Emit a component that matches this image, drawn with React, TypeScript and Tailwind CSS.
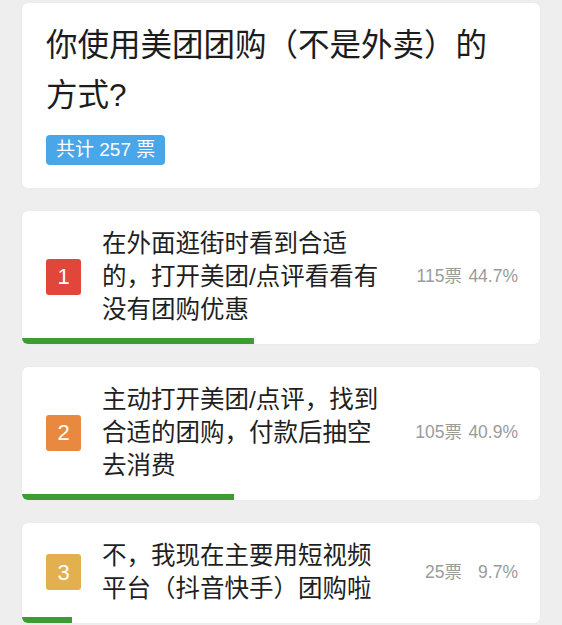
const options = [
  { id: 1, text: "在外面逛街时看到合适的，打开美团/点评看看有没有团购优惠", votes: 115, pct: 44.7, color: "bg-[#e0463a]" },
  { id: 2, text: "主动打开美团/点评，找到合适的团购，付款后抽空去消费", votes: 105, pct: 40.9, color: "bg-[#e8893f]" },
  { id: 3, text: "不，我现在主要用短视频平台（抖音快手）团购啦", votes: 25, pct: 9.7, color: "bg-[#e3b04f]" },
];

const App = () => {
  return (
    <div className="min-h-[625px] bg-[#eeeeee] pt-[3px] px-[22px] font-['Liberation_Sans','Noto_Sans_CJK_SC',sans-serif]">
      <div className="bg-white rounded-md shadow-[0_0_1px_rgba(0,0,0,0.08)] pl-[24px] pr-[22px] pt-[17px] pb-[23px]">
        <h1 className="text-[31.5px] leading-[50px] text-[#1c1c1c] font-normal">
          你使用美团团购（不是外卖）的方式?
        </h1>
        <span className="inline-block mt-[15px] bg-[#49a6e9] text-white text-[19px] leading-[30px] px-[10px] rounded-[4px]">
          共计 257 票
        </span>
      </div>

      <div className="flex flex-col gap-[23px] mt-[23px]">
        {options.map((o) => (
          <div key={o.id} className="bg-white rounded-md overflow-hidden shadow-[0_0_1px_rgba(0,0,0,0.08)]">
            <div className="flex items-center pl-[24px] pr-[22px] pt-[16px] pb-[12px]">
              <div className={`${o.color} shrink-0 w-[35px] h-[36px] rounded-[3px] flex items-center justify-center text-white text-[22px] font-light`}>
                {o.id}
              </div>
              <p className="ml-[21px] w-[285px] text-[24.5px] leading-[33px] text-[#1f1f1f]">
                {o.text}
              </p>
              <div className="ml-auto flex items-baseline text-[17.5px] text-[#9b9b9b]">
                <span className="text-right">{o.votes}票</span>
                <span className="w-[56px] text-right">{o.pct}%</span>
              </div>
            </div>
            <div className="h-[6px] bg-[#3f9b33]" style={{ width: `${o.pct}%` }} />
          </div>
        ))}
      </div>
    </div>
  );
};

export default App;
